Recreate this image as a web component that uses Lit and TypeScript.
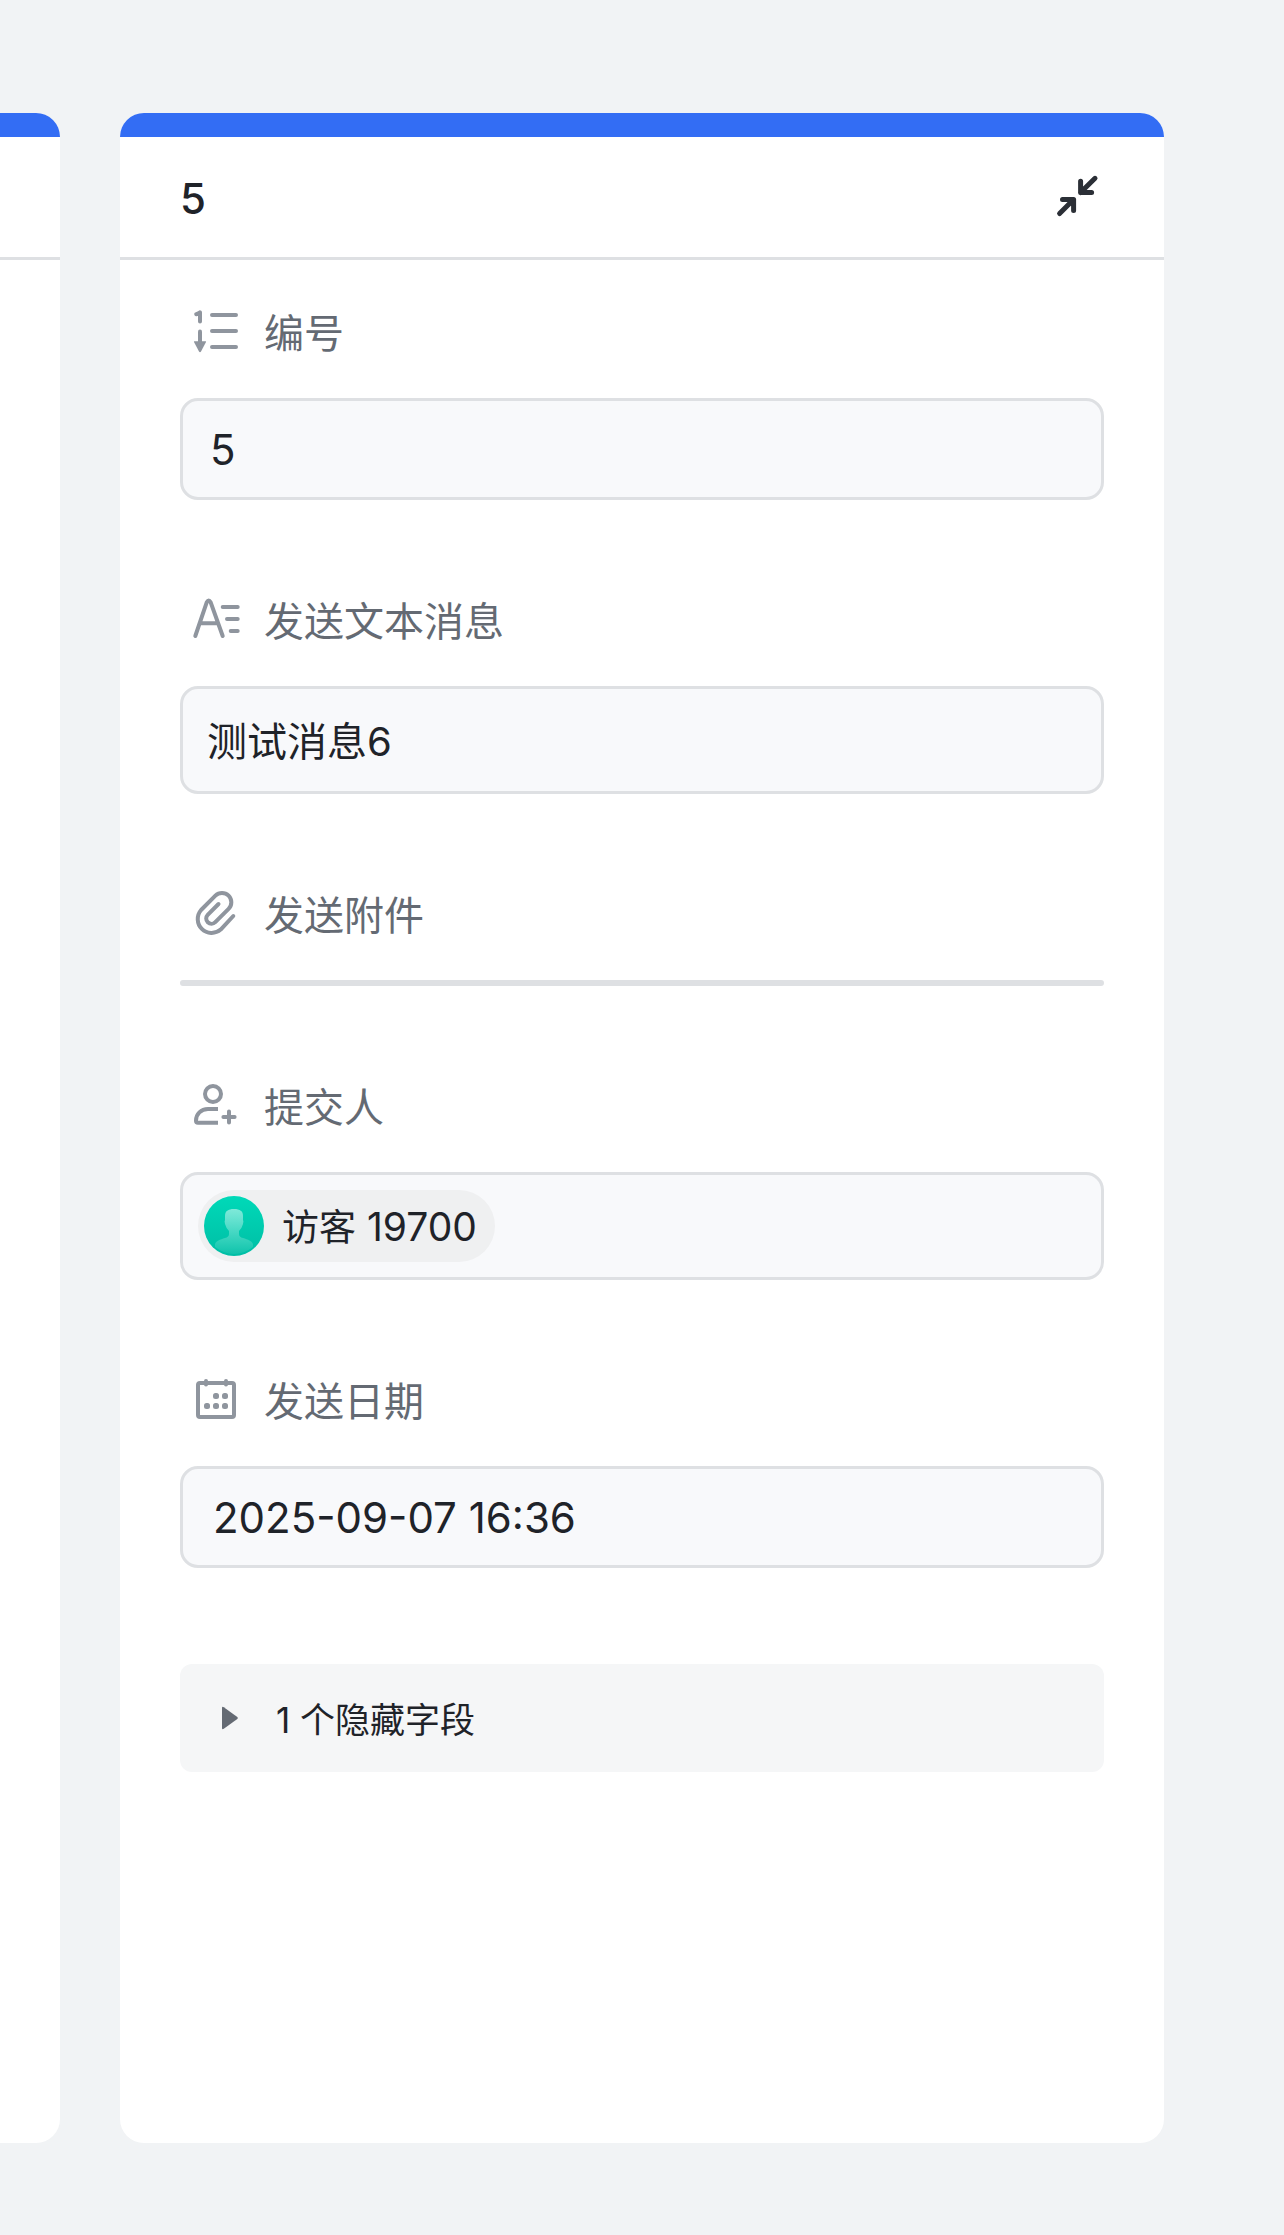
import { LitElement, html, css, svg, nothing } from "lit";
import { customElement, property } from "lit/decorators.js";

type FieldKind = "number" | "text" | "attachment" | "person" | "date";

interface Field {
  id: string;
  kind: FieldKind;
  label: string;
  value: string;
}

const FIELDS: Field[] = [
  { id: "serial", kind: "number", label: "编号", value: "5" },
  { id: "message", kind: "text", label: "发送文本消息", value: "测试消息6" },
  { id: "files", kind: "attachment", label: "发送附件", value: "" },
  { id: "submitter", kind: "person", label: "提交人", value: "访客 19700" },
  { id: "sent", kind: "date", label: "发送日期", value: "2025-09-07 16:36" },
];

const FIELD_ICONS = {
  number: svg`
    <path d="M4.2 6.2Q7 5.6 8 4.4V13.4" />
    <path d="M8 23.4V34" />
    <path class="solid" d="M2.4 33.3H13.6Q14.3 33.3 14 34L9 43.4Q8 45 7 43.4L2 34Q1.7 33.3 2.4 33.3Z" />
    <path d="M20 7H44M20 23H44M20 39H44" />`,
  text: svg`
    <path d="M3.3 40L14.8 6.2Q16.7 2.6 18.6 6.2L30.7 40M8 27.2H26" />
    <path d="M30.7 11H45.7M35 23H45.7M38.7 35H45.7" />`,
  attachment: svg`
    <path d="M41.3 26L28.7 39.6A13.9 13.9 0 0 1 9.1 20L23.4 5.7A9.3 9.3 0 0 1 36.6 18.9L23.3 32.2A5.3 5.3 0 0 1 15.7 24.8L26.5 14" />`,
  person: svg`
    <circle cx="21" cy="12" r="8" />
    <path class="flat" d="M26 27H16C9 27 4 32 4 38.5V39Q4 40.7 6 40.7H26" />
    <path d="M31.4 35H42.6M37 29.4V40.6" />`,
  date: svg`
    <rect x="6" y="7" width="36" height="34" rx="2" />
    <path d="M14 5V8.5M34 5V8.5" />
    <g class="solid">
      <rect x="21" y="17" width="6" height="6" rx="2.5" />
      <rect x="30" y="17" width="6" height="6" rx="2.5" />
      <rect x="12" y="27" width="6" height="6" rx="2.5" />
      <rect x="21" y="27" width="6" height="6" rx="2.5" />
      <rect x="30" y="27" width="6" height="6" rx="2.5" />
    </g>`,
};

@customElement("record-field")
class RecordField extends LitElement {
  @property({ attribute: false }) field!: Field;

  static styles = css`
    :host {
      display: block;
    }
    .label {
      display: flex;
      align-items: center;
      gap: 24px;
      height: 72px;
      margin-bottom: 30px;
      padding-left: 12px;
      color: #646a73;
      font-size: 40px;
      line-height: 72px;
    }
    .caption {
      padding-top: 3px;
    }
    .icon {
      flex: none;
      width: 48px;
      height: 48px;
      fill: none;
      stroke: #8f959e;
      stroke-width: 4;
      stroke-linecap: round;
      stroke-linejoin: round;
    }
    .solid {
      fill: #8f959e;
      stroke: none;
    }
    .flat {
      stroke-linecap: butt;
    }
    .box {
      display: block;
      box-sizing: border-box;
      width: 100%;
      margin: 0;
      border: 3px solid #dee0e3;
      border-radius: 18px;
      background: #f8f9fb;
      color: #1f2329;
      font-family: inherit;
      outline: none;
    }
    .number,
    .date {
      height: 102px;
      padding: 0 27px;
      font-size: 42px;
    }
    .date {
      padding: 0 30px;
    }
    .text {
      height: 108px;
      padding: 0 24px 3px;
      font-size: 40px;
    }
    .person {
      display: flex;
      padding: 15px;
    }
    .attachment {
      border-radius: 3px;
    }
    .chip {
      display: flex;
      align-items: center;
      gap: 18px;
      height: 72px;
      box-sizing: border-box;
      padding: 6px 18px 6px 6px;
      border-radius: 36px;
      background: #eff0f1;
      font-size: 37px;
      line-height: 60px;
      white-space: nowrap;
    }
    .name {
      padding-top: 3px;
    }
    .latin {
      font-size: 39px;
    }
    .avatar {
      display: block;
      flex: none;
      width: 60px;
      height: 60px;
    }
  `;

  private caption() {
    const { kind, label } = this.field;
    return html`<svg class="icon" viewBox="0 0 48 48" aria-hidden="true">${FIELD_ICONS[kind]}</svg
      ><span class="caption">${label}</span>`;
  }

  private person() {
    const [word, ...rest] = this.field.value.split(" ");
    return html`
      <span class="chip">
        <svg class="avatar" viewBox="0 0 60 60" aria-hidden="true">
          <defs>
            <linearGradient id="disc" x1="0" y1="0" x2="0" y2="1">
              <stop offset="0" stop-color="#00d9b8" />
              <stop offset="1" stop-color="#00bea5" />
            </linearGradient>
            <linearGradient id="bust" x1="0" y1="0" x2="0" y2="1">
              <stop offset="0" stop-color="#fff" stop-opacity="0.5" />
              <stop offset="1" stop-color="#fff" stop-opacity="0.06" />
            </linearGradient>
          </defs>
          <circle cx="30" cy="30" r="30" fill="url(#disc)" />
          <path
            fill="url(#bust)"
            d="M30 13C36 13 39 15 39 20V24Q39.8 25 39 28Q38 32 35 35V38Q35 41 39 42C44 43.5 48 45 49 48V51Q40 58 30 58T11 51V48C12 45 16 43.5 21 42Q25 41 25 38V35Q22 32 21 28Q20.2 25 21 24V20C21 15 24 13 30 13Z"
          />
        </svg>
        <span class="name">${word}<span class="latin"> ${rest.join(" ")}</span></span>
      </span>
    `;
  }

  render() {
    const { id, kind, value } = this.field;
    if (kind === "attachment" || kind === "person") {
      return html`
        <div class="label" id="${id}-label">${this.caption()}</div>
        <div class="box ${kind}" role="group" aria-labelledby="${id}-label">
          ${kind === "person" ? this.person() : nothing}
        </div>
      `;
    }
    return html`
      <label class="label" for=${id}>${this.caption()}</label>
      <input class="box ${kind}" id=${id} type="text" readonly .value=${value} />
    `;
  }
}

@customElement("app-root")
class AppRoot extends LitElement {
  static styles = css`
    :host {
      display: block;
      font-family: Inter, "Noto Sans CJK SC", sans-serif;
    }
    .board {
      display: flex;
      gap: 60px;
      box-sizing: border-box;
      min-height: 100vh;
      padding: 113px 120px 92px 0;
      background: #f1f3f5;
    }
    .card {
      flex: 1;
      min-width: 0;
      overflow: hidden;
      border-radius: 24px;
      background: #fff;
    }
    .previous {
      flex: none;
      width: 60px;
      border-top-left-radius: 0;
      border-bottom-left-radius: 0;
    }
    .accent {
      height: 24px;
      background: #336df4;
    }
    .head {
      display: flex;
      align-items: center;
      justify-content: space-between;
      height: 120px;
      padding: 0 60px;
      border-bottom: 3px solid #dee0e3;
    }
    .title {
      margin: 0;
      padding-top: 3px;
      color: #1f2329;
      font-size: 42px;
      font-weight: 500;
      line-height: 66px;
    }
    .collapse {
      display: grid;
      place-items: center;
      width: 54px;
      height: 54px;
      padding: 0;
      border: 0;
      background: none;
      cursor: pointer;
    }
    .collapse svg {
      width: 48px;
      height: 48px;
      fill: none;
      stroke: #2b2f36;
      stroke-width: 5;
      stroke-linecap: round;
      stroke-linejoin: round;
    }
    .body {
      display: flex;
      flex-direction: column;
      gap: 84px;
      padding: 36px 60px 60px;
    }
    .hidden-fields {
      display: flex;
      align-items: center;
      gap: 36px;
      width: 100%;
      height: 108px;
      margin-top: 12px;
      padding: 0 42px;
      border: 0;
      border-radius: 12px;
      background: #f5f6f7;
      color: #1f2329;
      font-family: inherit;
      font-size: 35px;
      line-height: 54px;
      cursor: pointer;
    }
    .hidden-fields svg {
      width: 18px;
      height: 24px;
      fill: #646a73;
    }
    .summary {
      padding-top: 3px;
    }
  `;

  render() {
    return html`
      <main class="board">
        <div class="card previous">
          <div class="accent"></div>
          <div class="head"></div>
        </div>
        <article class="card">
          <div class="accent"></div>
          <header class="head">
            <h1 class="title">5</h1>
            <button class="collapse" type="button" aria-label="收起">
              <svg viewBox="0 0 48 48" aria-hidden="true">
                <path d="M42 5.3L27.6 19.6M27.6 8.3V19.6H38.6" />
                <path d="M6.6 40.6L20.6 26.6M9.5 26.6H20.6V37.6" />
              </svg>
            </button>
          </header>
          <div class="body">
            ${FIELDS.map((f) => html`<record-field .field=${f}></record-field>`)}
            <button class="hidden-fields" type="button" aria-expanded="false">
              <svg viewBox="0 0 18 24" aria-hidden="true">
                <path d="M0 2Q0 0 1.8 1.2L15.3 11Q16.5 12 15.3 13L1.8 22.8Q0 24 0 22Z" />
              </svg>
              <span class="summary">1 个隐藏字段</span>
            </button>
          </div>
        </article>
      </main>
    `;
  }
}
